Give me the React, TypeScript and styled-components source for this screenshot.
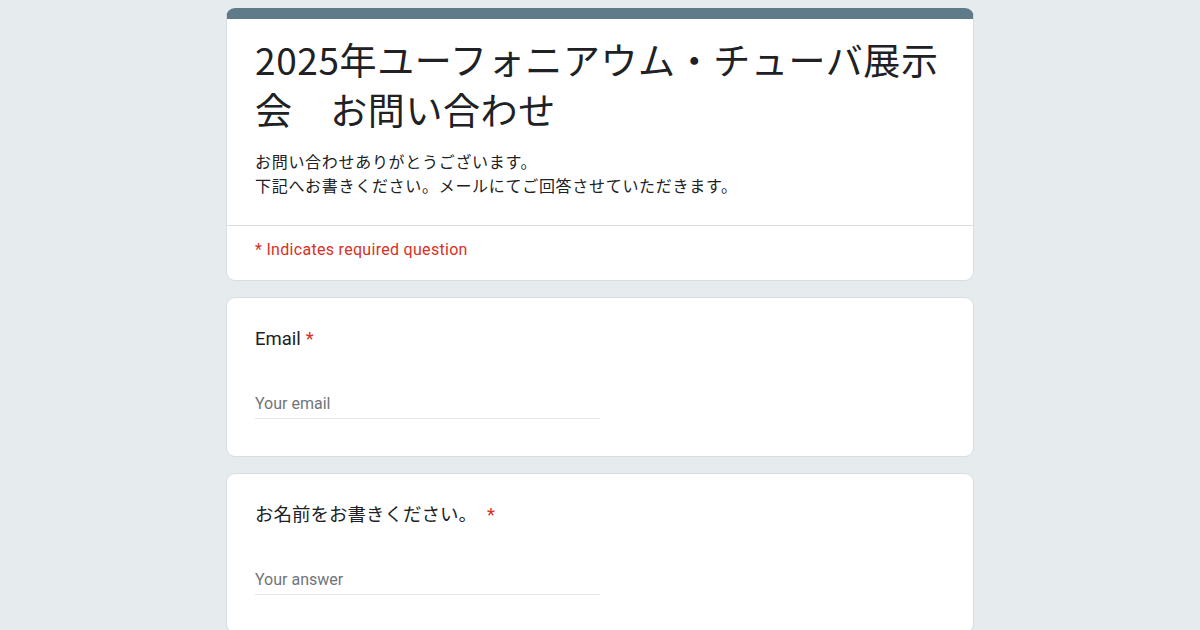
import React from 'react';
import styled, { createGlobalStyle } from 'styled-components';

const GlobalStyle = createGlobalStyle`
   html, body {
      margin: 0;
      padding: 0;
      background: #e6ebee;
   }
   body {
      font-family: Roboto, 'Noto Sans CJK JP', sans-serif;
      color: #202124;
   }
`;

const questions = [
   { label: 'Email', placeholder: 'Your email', gap: false },
   { label: 'お名前をお書きください。', placeholder: 'Your answer', gap: true },
];

const App = () => {
   return (
      <>
         <GlobalStyle />
         <Page>
            <HeaderCard>
               <HeaderBody>
                  <Title>2025年ユーフォニアウム・チューバ展示会　お問い合わせ</Title>
                  <Description>
                     お問い合わせありがとうございます。
                     <br />
                     下記へお書きください。メールにてご回答させていただきます。
                  </Description>
               </HeaderBody>
               <RequiredNote>* Indicates required question</RequiredNote>
            </HeaderCard>
            {questions.map((q) => (
               <QuestionCard key={q.label}>
                  <Label>
                     {q.label}
                     <Star $gap={q.gap}>*</Star>
                  </Label>
                  <AnswerLine>{q.placeholder}</AnswerLine>
               </QuestionCard>
            ))}
         </Page>
      </>
   );
};

export default App;

const Page = styled.div`
   width: 748px;
   margin: 0 auto;
   padding-top: 8px;
   display: flex;
   flex-direction: column;
   gap: 16px;
`;
const Card = styled.div`
   background: #fff;
   border: 1px solid #dadce0;
   border-radius: 9px;
   box-sizing: border-box;
`;
const HeaderCard = styled(Card)`
   border-top: 11px solid #5f7b89;
`;
const HeaderBody = styled.div`
   padding: 15px 28px 28px;
   border-bottom: 1px solid #dadce0;
`;
const Title = styled.h1`
   margin: 0;
   font-family: 'Noto Sans CJK JP', sans-serif;
   font-size: 37px;
   font-weight: 400;
   letter-spacing: 0.6px;
   line-height: 50px;
   color: #202124;
`;
const Description = styled.p`
   margin: 15px 0 0;
   font-family: 'Noto Sans CJK JP', sans-serif;
   font-size: 16px;
   letter-spacing: 0.7px;
   line-height: 24px;
   color: #202124;
`;
const RequiredNote = styled.p`
   margin: 0;
   padding: 12px 28px 18px;
   font-family: Roboto, sans-serif;
   font-size: 16px;
   letter-spacing: 0.3px;
   line-height: 24px;
   color: #d93025;
`;
const QuestionCard = styled(Card)`
   padding: 27px 28px 37px;
`;
const Label = styled.div`
   font-family: Roboto, 'Noto Sans CJK JP', sans-serif;
   font-size: 18.5px;
   line-height: 28px;
   color: #202124;
`;
const Star = styled.span<{ $gap: boolean }>`
   color: #d93025;
   margin-left: ${(p) => (p.$gap ? '10px' : '5px')};
`;
const AnswerLine = styled.div`
   margin-top: 37px;
   width: 50%;
   height: 28px;
   line-height: 28px;
   border-bottom: 1px solid #e3e5e8;
   font-family: Roboto, sans-serif;
   font-size: 16px;
   color: #70757a;
`;
